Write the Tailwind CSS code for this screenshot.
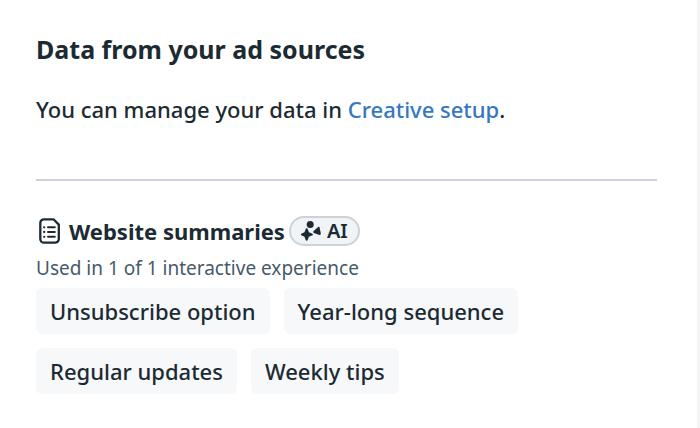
<!DOCTYPE html>
<html lang="en">
<head>
    <meta charset="UTF-8">
    <meta name="viewport" content="width=device-width, initial-scale=1.0">
    <title>Data from your ad sources</title>
    <script src="https://cdn.jsdelivr.net/npm/@tailwindcss/browser@4"></script>
</head>
<body class="bg-white font-['Noto_Sans',sans-serif] text-[#1c2b33]">

<main class="min-h-screen border-r-3 border-[#f5f5f6] pl-9 pr-10 pt-[31px]">
    <h1 class="text-[25px] leading-9 font-bold">Data from your ad sources</h1>
    <p class="mt-6 text-[22px] leading-9 font-medium">You can manage your data in <a href="#" class="text-[#3578c0]">Creative setup</a>.</p>

    <hr class="mt-[52px] border-t-2 border-[#cbd2d9]">

    <!-- Website summaries -->
    <section class="mt-[34px]">
        <div class="flex items-center">
            <svg class="mr-2 h-[26px] w-[25px] shrink-0" viewBox="0 0 25 26" fill="none" stroke="#1c2b33" stroke-linecap="round">
                <path d="M8 1.300h9.500l5.300 5.300V21a3.700 3.700 0 0 1-3.700 3.700H8A3.700 3.700 0 0 1 4.300 21V5A3.700 3.700 0 0 1 8 1.300z" stroke-width="2.300" stroke-linejoin="round"/>
                <path d="M12 9.300h6.800M12 14h6.800M12 18.800h6.800" stroke-width="2"/>
                <path d="M8.200 9.300h.01M8.200 14h.01M8.200 18.800h.01" stroke-width="2.300"/>
            </svg>
            <h2 class="text-[22px] leading-8 font-bold">Website summaries</h2>
            <span class="ml-1 flex h-[30px] items-center gap-[6px] rounded-full border-2 border-[#cbd2d9] bg-[#f1f4f7] px-[10px] text-[20px] font-semibold">
                <svg class="h-5 w-5" viewBox="0 0 20 20" fill="#1c2b33">
                    <circle cx="9.200" cy="3.600" r="3.500"/>
                    <path d="M12.600 10l4.500-3.900q1.100-.8 1.500.5l1.200 6q.2 1.400-1.200 1.300l-5.800-2q-1.200-.7-.2-1.900z"/>
                    <path d="M5.700 7.300q.8 0 1.100 1l1.100 3 3 1.100q1 .3 1 1.100t-1 1.100l-3 1.100-1.100 3q-.3 1-1.100 1t-1.100-1l-1.100-3-2.700-1.100q-.9-.3-.9-1.100t.9-1.100l2.700-1.100 1.100-3q.3-1 1.100-1z"/>
                </svg>
                AI
            </span>
        </div>
        <p class="mt-[9px] text-[19px] leading-6 text-[#465a69]">Used in 1 of 1 interactive experience</p>
        <ul class="mt-2 flex flex-wrap gap-[14px] text-[22px] leading-[46px] font-medium">
            <li class="rounded-md bg-[#f7f8fa] px-[14px]">Unsubscribe option</li>
            <li class="rounded-md bg-[#f7f8fa] px-[14px]">Year-long sequence</li>
            <li class="rounded-md bg-[#f7f8fa] px-[14px]">Regular updates</li>
            <li class="rounded-md bg-[#f7f8fa] px-[14px]">Weekly tips</li>
        </ul>
    </section>
</main>

</body>
</html>
